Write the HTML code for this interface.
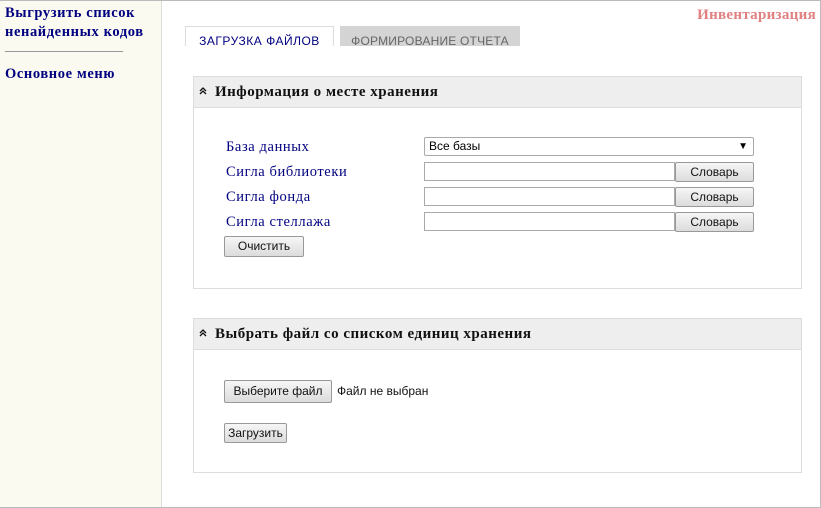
<!DOCTYPE html>
<html><head><meta charset="utf-8"><style>
*{box-sizing:border-box;margin:0;padding:0}
body{width:821px;height:508px;position:relative;background:#fff;font-family:"Liberation Serif",serif;overflow:hidden}
.frame{position:absolute;left:0;top:0;width:821px;height:508px;border:1px solid #bbb;border-left:none}
.side{position:absolute;left:0;top:1px;width:162px;height:506px;background:#fafaf0;border-right:1px solid #ddd}
.side a{color:#000080;font-weight:bold;font-size:14.5px;letter-spacing:0.6px;text-decoration:none;line-height:19px;display:block;white-space:nowrap}
.abs{position:absolute}
.tab{position:absolute;font-family:"Liberation Sans",sans-serif;font-size:12px;letter-spacing:0.5px;text-transform:uppercase;text-align:center}
.panel{position:absolute;left:193px;width:609px;border:1px solid #ddd}
.ph{height:31px;background:#eee;border-bottom:1px solid #ddd;font-weight:bold;font-size:15px;letter-spacing:0.5px;line-height:30px;padding-left:21px;color:#111;position:relative}
.ph svg{position:absolute;left:5px;top:10px}
.lbl{position:absolute;left:226px;color:#000080;font-size:14.5px;letter-spacing:0.6px}
.inp{position:absolute;left:424px;width:251px;height:19px;border:1px solid #aaa;background:#fff}
.btn{position:absolute;border:1px solid #999;border-radius:2px;background:linear-gradient(#f6f6f6,#dcdcdc);font-family:"Liberation Sans",sans-serif;font-size:12px;color:#111;text-align:center}
.sans{font-family:"Liberation Sans",sans-serif}
</style></head><body>
<div class="side">
<div class="abs" style="left:5px;top:3px"><a>Выгрузить список</a><a>ненайденных кодов</a></div>
<div class="abs" style="left:5px;top:50px;width:118px;border-top:1px solid #999"></div>
<div class="abs" style="left:5px;top:64px"><a>Основное меню</a></div>
</div>
<div class="abs" style="right:5px;top:7px;color:#e08080;font-weight:bold;font-size:15px;letter-spacing:0.3px">Инвентаризация</div>
<div class="tab" style="left:185px;top:26px;width:149px;height:20px;border:1px solid #ddd;border-bottom:none;color:#000080;line-height:28px;background:#fff">Загрузка файлов</div>
<div class="tab" style="left:340px;top:26px;width:180px;height:20px;background:#d4d4d4;color:#666;line-height:30px;letter-spacing:0.2px">Формирование отчета</div>
<div class="panel" style="top:76px;height:213px"><div class="ph"><svg width="8" height="8" viewBox="0 0 8 8"><path d="M1 4L4 1L7 4M1 7L4 4L7 7" fill="none" stroke="#111" stroke-width="1.3"/></svg>Информация о месте хранения</div></div>
<div class="lbl" style="top:139px">База данных</div>
<div class="lbl" style="top:164px">Сигла библиотеки</div>
<div class="lbl" style="top:189px">Сигла фонда</div>
<div class="lbl" style="top:214px">Сигла стеллажа</div>
<div class="inp sans" style="top:137px;width:330px;font-size:12px;line-height:17px;padding-left:4px;border-radius:2px">Все базы<span style="position:absolute;right:5px;font-size:10px">▼</span></div>
<div class="inp" style="top:162px"></div><div class="btn" style="left:675px;top:162px;width:79px;height:20px;line-height:18px">Словарь</div>
<div class="inp" style="top:187px"></div><div class="btn" style="left:675px;top:187px;width:79px;height:20px;line-height:18px">Словарь</div>
<div class="inp" style="top:212px"></div><div class="btn" style="left:675px;top:212px;width:79px;height:20px;line-height:18px">Словарь</div>
<div class="btn" style="left:224px;top:236px;width:80px;height:21px;line-height:19px">Очистить</div>
<div class="panel" style="top:318px;height:155px"><div class="ph"><svg width="8" height="8" viewBox="0 0 8 8"><path d="M1 4L4 1L7 4M1 7L4 4L7 7" fill="none" stroke="#111" stroke-width="1.3"/></svg>Выбрать файл со списком единиц хранения</div></div>
<div class="btn" style="left:224px;top:380px;width:108px;height:23px;line-height:21px">Выберите файл</div>
<div class="abs sans" style="left:337px;top:384px;font-size:12px;color:#111">Файл не выбран</div>
<div class="btn" style="left:224px;top:423px;width:63px;height:20px;line-height:18px">Загрузить</div>
<div class="frame"></div>
</body></html>
